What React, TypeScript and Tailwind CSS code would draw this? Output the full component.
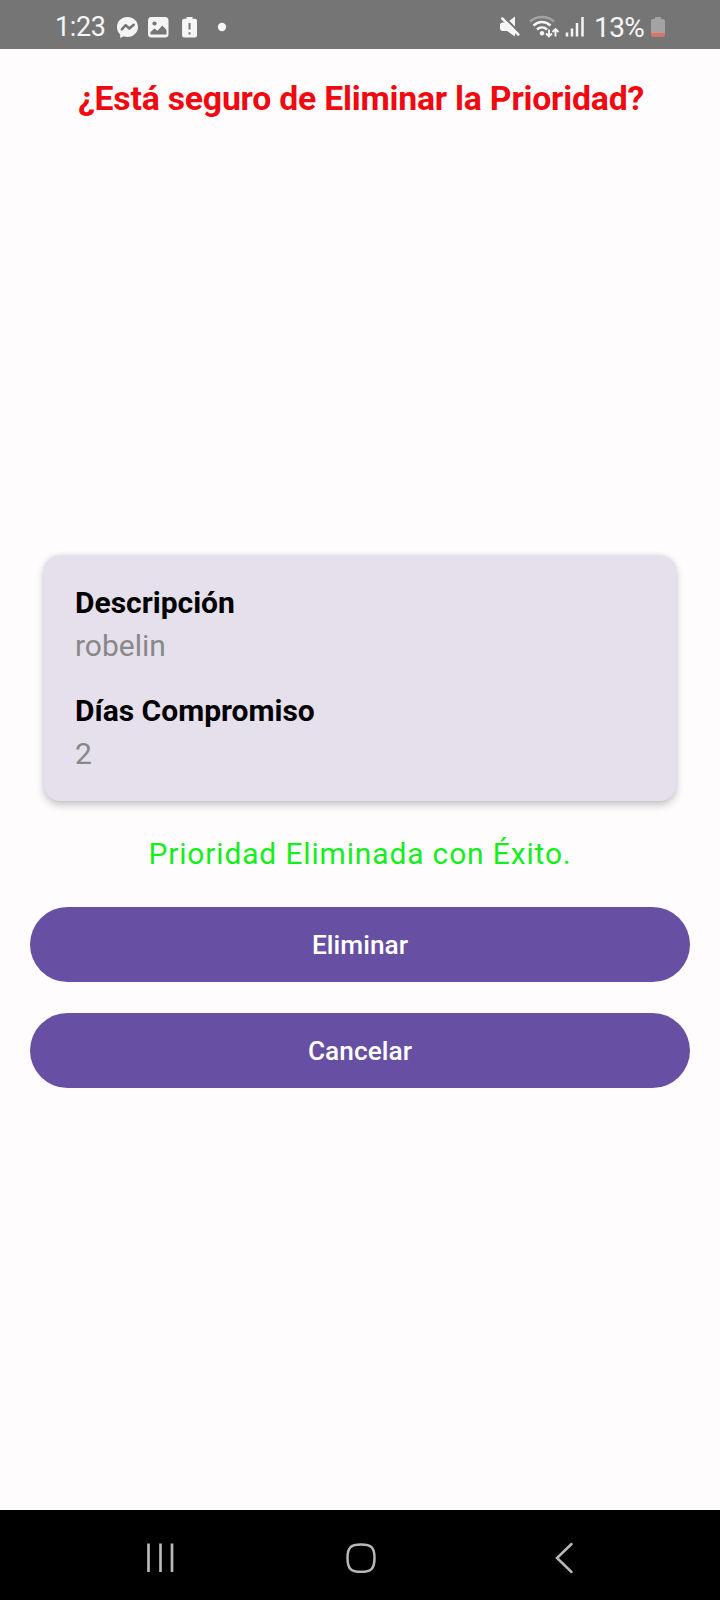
import type { ReactNode } from "react";

function StatusBar() {
  return (
    <header className="flex h-[49px] shrink-0 items-center bg-[#757575] pl-[55px] pr-[54px] text-[27px] leading-[49px] text-[#f5f5f5]">
      <span className="w-[62px] pt-[5px] tracking-[-0.4px]">1:23</span>
      <svg className="mt-1 h-[22px] w-[110px]" viewBox="117 15 110 22">
        <path d="M127.500 16C121.500 16 117 20.300 117 26c0 3 1.200 5.600 3.200 7.400V37l3.500-1.700c1.200.4 2.500.6 3.800.6 6 0 10.500-4.300 10.500-9.900S133.500 16 127.500 16Z" fill="#f5f5f5" />
        <path d="m121.800 28.300 3.900-4.100 3.600 3.300 4.400-3.800" fill="none" stroke="#757575" strokeWidth="2.500" strokeLinecap="round" strokeLinejoin="round" />
        <rect x="148" y="16" width="20.500" height="20.500" rx="3.500" fill="#f5f5f5" />
        <circle cx="154.500" cy="22.500" r="2.100" fill="#757575" />
        <path d="M150.500 33.500v-2.500l4-3.500 3 2.200 4.800-5.200 4.200 4.500v4.500Z" fill="#757575" />
        <path d="M186.500 16h6v1.800h2.300c1.500 0 2.200.8 2.200 2.200v14.300c0 1.500-.8 2.200-2.200 2.200h-10.500c-1.500 0-2.200-.8-2.200-2.200V20c0-1.400.8-2.200 2.200-2.200h2.200Z" fill="#f5f5f5" />
        <path d="M189.500 22v6.500M189.500 31.200v2.300" stroke="#757575" strokeWidth="2" />
        <circle cx="222" cy="26" r="4.200" fill="#f5f5f5" />
      </svg>
      <svg className="ml-auto mt-1 h-[24px] w-[86px]" viewBox="499 14 86 24">
        <path d="M502.500 21.500h4.500l8-6V35.500l-8-5.500h-4.500c-1.500 0-2.500-1-2.500-2.500v-3.500c0-1.500 1-2.500 2.500-2.500Z" fill="#f5f5f5" />
        <path d="m502.500 14.500 18 18" stroke="#757575" strokeWidth="2.200" />
        <path d="m502.300 17.500 16 16" stroke="#f5f5f5" strokeWidth="2.500" strokeLinecap="round" />
        <path d="M530 20.500c7-6 17-6 24 0" fill="none" stroke="#a3a3a3" strokeWidth="2.500" />
        <path d="M533.500 24.500c5-4.600 12-4.600 17 0M537 28.500c3-2.800 7-2.800 10 0" fill="none" stroke="#f5f5f5" strokeWidth="2.500" />
        <circle cx="542" cy="32.200" r="2.200" fill="#f5f5f5" />
        <path d="M549 28.500v7M546 32.500l3 3 3-3M555.500 35.500V28M552.500 31l3-3 3 3" fill="none" stroke="#f5f5f5" strokeWidth="1.900" />
        <path d="M567 31.500V35.500M572 27.500V35.500M577 22V35.500M582.500 16V35.500" stroke="#f5f5f5" strokeWidth="2.500" />
      </svg>
      <span className="ml-[9px] w-[56px] pt-[5px] text-[28px] tracking-[-0.6px]">13%</span>
      <svg className="mt-1 h-[22px] w-[16px]" viewBox="0 0 16 22">
        <path d="M5 1h6v2h2c1.300 0 2 .7 2 2v13.500c0 1.300-.7 2-2 2H3c-1.300 0-2-.7-2-2V5c0-1.300.7-2 2-2h2Z" fill="#a3a3a3" />
        <path d="M1 17h14v1.500c0 1.300-.7 2-2 2H3c-1.300 0-2-.7-2-2Z" fill="#e3705f" />
      </svg>
    </header>
  );
}

function Field({ label, value }: { label: string; value: string }) {
  return (
    <div className="text-[30px] leading-[43px]">
      <div className="font-bold text-black">{label}</div>
      <div className="text-[#888888]">{value}</div>
    </div>
  );
}

function PillButton({ children }: { children: ReactNode }) {
  return (
    <button className="h-[75px] w-full rounded-full bg-[#6750a3] pt-[2px] text-[26.250px] font-medium tracking-[0.050px] text-white">
      {children}
    </button>
  );
}

export default function App() {
  return (
    <div className="flex h-[1600px] w-[720px] flex-col bg-[#fffcfe] font-['Roboto',sans-serif]">
      <StatusBar />
      <main className="flex flex-1 flex-col px-[30px]">
        <h1 className="mt-[28px] pl-[2px] text-center text-[33.750px] leading-[44px] font-bold tracking-[-0.210px] whitespace-nowrap text-[#ee0a10]">
          ¿Está seguro de Eliminar la Prioridad?
        </h1>
        <section className="mx-[14px] mt-[433.500px] flex h-[246.500px] flex-col gap-[22px] rounded-[16px] bg-[#e5e0eb] px-[31px] pt-[26.500px] shadow-[0_4px_8px_rgba(0,0,0,0.22),0_0_5px_rgba(0,0,0,0.06)]">
          <Field label="Descripción" value="robelin" />
          <Field label="Días Compromiso" value="2" />
        </section>
        <p className="mt-[30px] text-center text-[30px] leading-[45px] tracking-[0.840px] text-[#14ee1c]">
          Prioridad Eliminada con Éxito.
        </p>
        <div className="mt-[31px] flex flex-col gap-[31px]">
          <PillButton>Eliminar</PillButton>
          <PillButton>Cancelar</PillButton>
        </div>
      </main>
      <nav className="flex h-[90px] shrink-0 items-center bg-black pl-[146px]">
        <svg className="mt-1 h-[32px] w-[30px]" viewBox="0 0 30 32" fill="none" stroke="#b8b8b8" strokeWidth="2.700">
          <path d="M2.500 2.500v28.500M14.500 2.500v28.500M26 2.500v28.500" />
        </svg>
        <svg className="mt-[5px] ml-[169px] h-[32px] w-[32px]" viewBox="0 0 32 32" fill="none" stroke="#b8b8b8" strokeWidth="2.500">
          <path d="M16 2.500C26.500 2.500 29.500 5.500 29.500 16S26.500 29.800 16 29.800 2.500 26.500 2.500 16 5.500 2.500 16 2.500Z" />
        </svg>
        <svg className="mt-[5px] ml-[177px] h-[32px] w-[20px]" viewBox="0 0 20 32" fill="none" stroke="#b8b8b8" strokeWidth="2.500" strokeLinecap="round">
          <path d="M17.500 2 3 16l14.500 14" />
        </svg>
      </nav>
    </div>
  );
}
